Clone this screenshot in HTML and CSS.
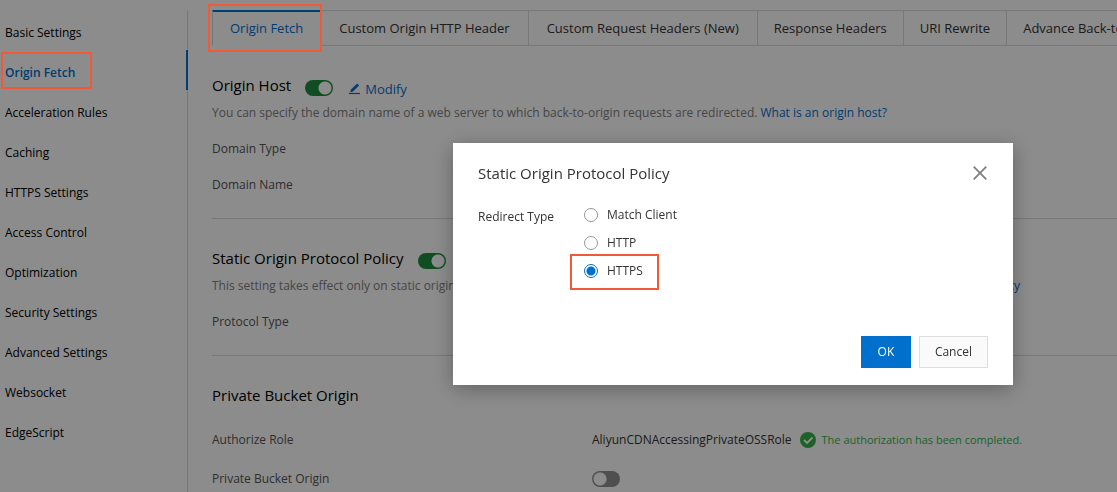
FILE: index.html
```html
<!DOCTYPE html>
<html lang="en">
<head>
<meta charset="utf-8">
<title>Origin Fetch</title>
<link rel="stylesheet" href="styles.css">
</head>
<body>
<div class="layout">
  <nav class="sidebar" aria-label="Domain settings">
    <a class="nav-item" href="#basic">Basic Settings</a>
    <a class="nav-item nav-item-active" href="#origin" aria-current="page">Origin Fetch</a>
    <a class="nav-item" href="#acceleration">Acceleration Rules</a>
    <a class="nav-item" href="#caching">Caching</a>
    <a class="nav-item" href="#https">HTTPS Settings</a>
    <a class="nav-item" href="#access">Access Control</a>
    <a class="nav-item" href="#optimization">Optimization</a>
    <a class="nav-item" href="#security">Security Settings</a>
    <a class="nav-item" href="#advanced">Advanced Settings</a>
    <a class="nav-item" href="#websocket">Websocket</a>
    <a class="nav-item" href="#edgescript">EdgeScript</a>
  </nav>
  <main class="content">
    <div class="tabs" role="tablist">
      <button class="tab tab-active" role="tab" aria-selected="true">Origin Fetch</button>
      <button class="tab" role="tab">Custom Origin HTTP Header</button>
      <button class="tab" role="tab">Custom Request Headers (New)</button>
      <button class="tab tab-compact" role="tab">Response Headers</button>
      <button class="tab tab-compact" role="tab">URI Rewrite</button>
      <button class="tab tab-compact tab-last" role="tab">Advance Back-to-origin</button>
    </div>

    <section class="section">
      <div class="section-head">
        <h2 class="section-title" id="host-title">Origin Host</h2>
        <input class="switch" type="checkbox" role="switch" aria-labelledby="host-title" checked>
        <a class="modify" href="#modify">
          <svg class="modify-icon" viewBox="0 0 12 12" aria-hidden="true"><path d="M0 10.5h11" stroke="currentColor" stroke-width="1.2"/><path d="M1.2 9.2 2 6.6 8.2.6l1.9 1.8L4 8.6z" fill="currentColor"/></svg>
          Modify
        </a>
      </div>
      <p class="desc">You can specify the domain name of a web server to which back-to-origin requests are redirected. <a class="link" href="#help">What is an origin host?</a></p>
      <dl class="rows">
        <dt>Domain Type</dt><dd></dd>
        <dt>Domain Name</dt><dd></dd>
      </dl>
    </section>

    <section class="section">
      <div class="section-head">
        <h2 class="section-title" id="policy-title">Static Origin Protocol Policy</h2>
        <input class="switch" type="checkbox" role="switch" aria-labelledby="policy-title" checked>
      </div>
      <p class="desc">This setting takes effect only on static origin resources and requests are redirected by the selected type of protocol. <a class="link" href="#policy">Configure the protocol policy</a></p>
      <dl class="rows">
        <dt>Protocol Type</dt><dd></dd>
      </dl>
    </section>

    <section class="section">
      <div class="section-head">
        <h2 class="section-title">Private Bucket Origin</h2>
      </div>
      <dl class="rows rows-roomy">
        <dt>Authorize Role</dt>
        <dd>
          <span>AliyunCDNAccessingPrivateOSSRole</span>
          <span class="status">
            <svg class="status-icon" viewBox="0 0 16 16" aria-hidden="true"><circle cx="8" cy="8" r="8" fill="currentColor"/><path d="m4 8 3 3 5.5-5.5" fill="none" stroke="#fff" stroke-width="1.8"/></svg>
            The authorization has been completed.
          </span>
        </dd>
        <dt id="bucket-label">Private Bucket Origin</dt>
        <dd><input class="switch" type="checkbox" role="switch" aria-labelledby="bucket-label"></dd>
      </dl>
    </section>
  </main>
</div>

<div class="overlay">
  <form class="dialog" role="dialog" aria-modal="true" aria-labelledby="dialog-title">
    <header class="dialog-head">
      <h1 class="dialog-title" id="dialog-title">Static Origin Protocol Policy</h1>
      <button class="close" type="button" aria-label="Close">
        <svg class="close-icon" viewBox="0 0 14 14" aria-hidden="true"><path d="m.7.7 12.6 12.6M13.3.7.7 13.3" stroke="currentColor" stroke-width="1.8"/></svg>
      </button>
    </header>
    <div class="field" role="radiogroup" aria-labelledby="redirect-label">
      <span class="field-label" id="redirect-label">Redirect Type</span>
      <div class="options">
        <label class="option"><input class="radio" type="radio" name="redirect">Match Client</label>
        <label class="option"><input class="radio" type="radio" name="redirect">HTTP</label>
        <label class="option option-marked"><input class="radio" type="radio" name="redirect" checked>HTTPS</label>
      </div>
    </div>
    <footer class="dialog-foot">
      <button class="btn btn-primary" type="button">OK</button>
      <button class="btn" type="button">Cancel</button>
    </footer>
  </form>
</div>
</body>
</html>
```
FILE: styles.css
```css
*,
*::after {
  box-sizing: border-box;
}

body {
  margin: 0;
  height: 100vh;
  overflow: hidden;
  background: #fff;
  color: #000;
  font: 12px/16px "Open Sans", "Noto Sans", sans-serif;
}

button {
  font: inherit;
}

a {
  text-decoration: none;
}

.layout {
  display: flex;
  height: 100%;
  padding-top: 10px;
}

.sidebar {
  flex: 0 0 188px;
  border-right: 1px solid #dadada;
}

.nav-item {
  display: block;
  position: relative;
  height: 40px;
  margin-right: -1px;
  padding: 6px 0 0 5px;
  color: #000;
  line-height: 34px;
}

.nav-item-active {
  border-right: 2px solid #0070cc;
  color: #0070cc;
  font-weight: 600;
}

/* highlight frames, drawn above the dimmed page */
.nav-item-active::after,
.tab-active::after,
.option-marked::after {
  content: "";
  position: absolute;
  z-index: 20;
  border: 2px solid #f25a35;
  pointer-events: none;
}

.nav-item-active::after {
  left: 1px;
  top: 2px;
  width: 91px;
  height: 37px;
}

.content {
  flex: 1;
  min-width: 0;
  margin-left: 24px;
}

.tabs {
  display: flex;
  height: 36px;
}

.tab {
  flex: none;
  position: relative;
  padding: 0 18px;
  border: solid #dadada;
  border-width: 1px 1px 1px 0;
  background: none;
  color: #333;
  font-size: 13px;
  line-height: 34px;
}

.tab-active {
  padding: 0 17px;
  border-left-width: 1px;
  border-bottom-color: transparent;
  box-shadow: inset 0 1px #0070cc;
  border-top-color: #0070cc;
  color: #0070cc;
}

.tab-active::after {
  inset: -7px -2px -7px -5px;
}

.tab-compact {
  padding: 0 16px;
}

.tab-last {
  flex: 1 1 0;
  min-width: 0;
  overflow: hidden;
  padding-right: 0;
  border-right: 0;
  text-align: left;
  white-space: nowrap;
}

.section {
  padding: 26px 0 15px;
  border-bottom: 1px solid #dadada;
}

.section-head {
  display: flex;
  align-items: center;
  gap: 14px;
  height: 26px;
}

.section-title {
  margin: 0;
  font-size: 15px;
  font-weight: 400;
  line-height: 26px;
}

.switch {
  appearance: none;
  width: 28px;
  height: 16px;
  margin: 5px 0 0;
  border-radius: 8px;
  background: radial-gradient(circle at 8px 8px, #fff 6px, #919191 7px);
}

.switch:checked {
  background: radial-gradient(circle at 20px 8px, #fff 6px, #1e8e3e 7px);
}

.modify {
  display: flex;
  align-items: center;
  gap: 4px;
  padding: 8px 0 0 2px;
  color: #0070cc;
  font-size: 13px;
}

.modify-icon {
  width: 12px;
  height: 12px;
}

.desc {
  margin: 3px 0 6px;
  color: #808080;
  line-height: 24px;
  white-space: nowrap;
}

.link {
  color: #0070cc;
}

.rows {
  display: grid;
  grid-template-columns: 380px 1fr;
  margin: 0;
  color: #555;
  line-height: 36px;
}

.rows dd {
  display: flex;
  align-items: center;
  gap: 8px;
  margin: 0;
  color: #333;
}

.rows-roomy {
  margin-top: 12px;
  line-height: 39px;
}

.rows .switch {
  margin: 0;
}

.status {
  display: flex;
  align-items: center;
  gap: 6px;
  color: #35b34a;
  font-size: 11px;
}

.status-icon {
  width: 16px;
  height: 16px;
}

.overlay {
  position: fixed;
  inset: 0;
  z-index: 10;
  padding: 143px 0 0 453px;
  background: rgba(0, 0, 0, 0.45);
}

.dialog {
  width: 560px;
  padding: 16px 25px 17px;
  background: #fff;
  box-shadow: 0 4px 20px rgba(0, 0, 0, 0.3);
  color: #333;
}

.dialog-head {
  display: flex;
  align-items: center;
  justify-content: space-between;
  height: 28px;
}

.dialog-title {
  margin: 0;
  font-size: 15px;
  font-weight: 400;
}

.close {
  display: flex;
  padding: 0;
  border: 0;
  background: none;
  color: #808080;
}

.close-icon {
  width: 14px;
  height: 14px;
  margin-right: 1px;
}

.field {
  display: flex;
  padding: 14px 0 51px;
}

.field-label {
  flex: 0 0 106px;
  line-height: 32px;
}

.option {
  display: flex;
  position: relative;
  align-items: center;
  gap: 9px;
  height: 28px;
}

.option-marked::after {
  left: -14px;
  top: -3px;
  width: 89px;
  height: 36px;
}

.radio {
  appearance: none;
  width: 14px;
  height: 14px;
  margin: 0;
  border: 1px solid #999;
  border-radius: 50%;
}

.radio:checked {
  border-color: #0070cc;
  background: radial-gradient(circle, #0070cc 4px, #fff 5px);
}

.dialog-foot {
  display: flex;
  justify-content: flex-end;
  gap: 8px;
}

.btn {
  min-width: 50px;
  height: 32px;
  padding: 0 15px;
  border: 1px solid #dedede;
  background: #fafafa;
  color: #333;
}

.btn-primary {
  border-color: #0070cc;
  background: #0070cc;
  color: #fff;
}
```
